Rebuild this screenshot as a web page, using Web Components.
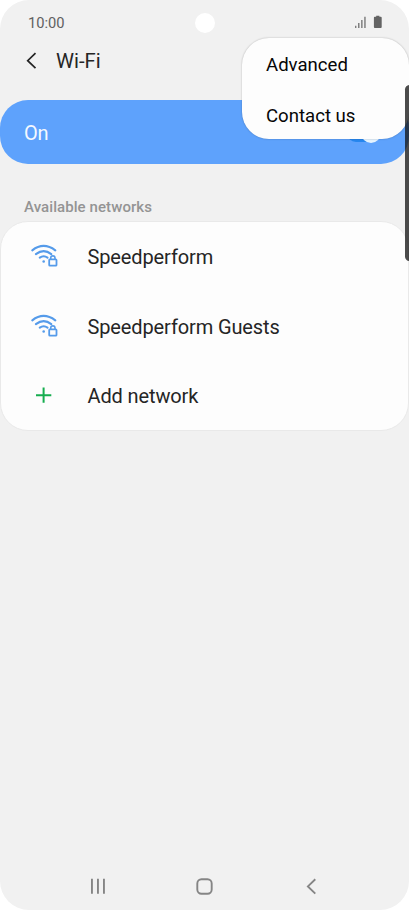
<!DOCTYPE html>
<html lang="en">
<head>
<meta charset="utf-8">
<title>Wi-Fi</title>
<style>
html,body{margin:0;background:#fff}
body{font-family:Roboto,sans-serif;width:409px;height:910px;overflow:hidden}
</style>
</head>
<body>
<phone-screen>
  <status-bar time="10:00"></status-bar>
  <title-bar>Wi-Fi</title-bar>
  <wifi-switch>On</wifi-switch>
  <section-label>Available networks</section-label>
  <network-list>
    <network-row icon="wifi">Speedperform</network-row>
    <network-row icon="wifi">Speedperform Guests</network-row>
    <network-row icon="add">Add network</network-row>
  </network-list>
  <nav-bar slot="nav"></nav-bar>
  <overflow-menu slot="overlay">
    <menu-entry>Advanced</menu-entry>
    <menu-entry>Contact us</menu-entry>
  </overflow-menu>
  <edge-handle slot="overlay"></edge-handle>
</phone-screen>
<script>
const define = (name, html, setup) => {
  const template = document.createElement('template');
  template.innerHTML = html;
  customElements.define(name, class extends HTMLElement {
    constructor() {
      super();
      this.attachShadow({mode: 'open'}).append(template.content.cloneNode(true));
    }
    connectedCallback() { if (setup) setup(this, this.shadowRoot); }
  });
};

define('phone-screen', `<style>
:host{display:flex;flex-direction:column;position:relative;width:409px;height:910px;background:#f1f1f1;border-radius:29px;overflow:hidden;color:#252525}
main{flex:1;display:flex;flex-direction:column}
</style><main><slot></slot></main><slot name="nav"></slot><slot name="overlay"></slot>`);

define('status-bar', `<style>
:host{display:grid;grid-template-columns:1fr 20px 1fr;align-items:center;height:45px;color:#606060;font-size:14.7px;box-sizing:border-box}
.time{padding-left:28px;line-height:20px}
.camera{width:20px;height:20px;border-radius:50%;background:#fff}
svg{justify-self:end;margin:0 26px 1px 0;display:block}
</style><span class="time"></span><span class="camera"></span>
<svg width="29" height="14" viewBox="0 0 29 14" fill="#636363"><path opacity=".8" d="M1 10.8h1.4V13H1zM4 8h1.5v5H4zM7.1 5h1.5v8H7.1zM10.2 1.7h1.5V13h-1.5z"/><path d="M22.2.7h3.2v1.1h1.4q.9 0 .9.9v9.4q0 .9-.9.9h-6q-.9 0-.9-.9V2.7q0-.9.9-.9h1.4z"/></svg>`,
(el, root) => { root.querySelector('.time').textContent = el.getAttribute('time'); });

define('title-bar', `<style>
:host{display:flex;align-items:center;height:31px;margin-bottom:24px;padding-left:26px;font-size:20.3px;line-height:24px}
svg{margin-right:19px}
</style><svg width="11" height="18" viewBox="0 0 11 18" fill="none" stroke="#252525" stroke-width="1.7"><path d="M9.5 1.2 1.7 8.7l7.8 7.5"/></svg><slot></slot>`);

define('wifi-switch', `<style>
:host{display:flex;align-items:center;justify-content:space-between;height:64px;border-radius:28px;background:#5ea2fc;color:#f4f9ff;font-size:20px;letter-spacing:-.2px;line-height:24px;padding:2px 28px 0 24px;box-sizing:border-box}
.track{width:34px;height:18px;margin-bottom:1px;border-radius:9px;background:#2787ef;display:flex;align-items:center;justify-content:flex-end}
.thumb{width:20px;height:20px;border-radius:50%;background:#e6f4ff;flex:none}
</style><slot></slot><span class="track"><span class="thumb"></span></span>`);

define('section-label', `<style>
:host{display:flex;align-items:end;height:58px;box-sizing:border-box;padding:0 24px 6px;color:#949494;font-size:15px;font-weight:500;letter-spacing:.08px;line-height:18px}
</style><slot></slot>`);

define('network-list', `<style>
:host{display:block;height:210px;box-sizing:border-box;border:1px solid #e9e9e9;border-radius:28px;background:#fdfdfd;margin-top:-1px}
</style><slot></slot>`);

define('network-row', `<style>
:host{display:flex;align-items:center;height:69.7px;padding-left:29px;font-size:20px;line-height:24px;letter-spacing:-.12px}
svg{width:28px;height:26px;margin-right:29.5px;flex:none}
svg[hidden]{display:none}
</style>
<svg class="wifi" viewBox="0 0 28 26" fill="none" stroke="#559bea" stroke-width="2.1" stroke-linecap="round"><path d="M2.3 6.3Q13.5-2.5 25.3 6.3M5.9 10.1q7.8-6.1 15.4 0M9.8 13.7q3.8-2.8 7.7-.1"/><circle cx="13.7" cy="17.5" r="1.3" fill="#559bea" stroke="none"/><rect x="19.2" y="15.4" width="7.3" height="6.3" rx=".7" stroke-width="1.8"/><path stroke-width="1.6" d="M20.7 15v-.9q0-2.200 2.150-2.200T25 14.100v.9"/></svg>
<svg class="add" viewBox="0 0 28 26" stroke="#16ad4f" stroke-width="2"><path d="M6 12.200h15.300M13.600 4.600v15.200"/></svg>
<slot></slot>`, (el, root) => {
  root.querySelectorAll('svg').forEach(s => s.toggleAttribute('hidden', !s.classList.contains(el.getAttribute('icon'))));
});

define('nav-bar', `<style>
:host{display:flex;height:48px;align-items:center;justify-content:space-between;padding:0 90px 1px 88px;box-sizing:border-box}
svg{display:block}
</style>
<svg width="20" height="20" viewBox="0 0 20 20" fill="#858585"><path d="M3 2.8h1.9v15H3zM9 2.8h1.9v15H9zM15 2.8h1.9v15H15z"/></svg>
<svg width="20" height="20" viewBox="0 0 20 20" fill="none" stroke="#858585" stroke-width="1.9"><rect x="1.3" y="3.3" width="14.4" height="14.4" rx="4.2"/></svg>
<svg width="16" height="20" viewBox="0 0 16 20" fill="none" stroke="#858585" stroke-width="1.9"><path d="M12.3 3.2 4.9 10.4l7.4 7.2"/></svg>`);

define('overflow-menu', `<style>
:host{display:block;position:absolute;left:242px;top:38px;width:167px;height:101px;padding-top:1px;box-sizing:border-box;border-radius:27px;background:#fdfdfd;box-shadow:0 0 2px rgba(0,0,0,.28);color:#060606}
</style><slot></slot>`);

define('menu-entry', `<style>
:host{display:flex;align-items:center;height:51px;padding-left:24px;font-size:18.6px;line-height:22px}
</style><slot></slot>`);

define('edge-handle', `<style>
:host{display:block;position:absolute;left:405px;top:85px;width:9px;height:176px;border-radius:5px;background:rgba(20,20,20,.76)}
</style>`);
</script>
</body>
</html>
